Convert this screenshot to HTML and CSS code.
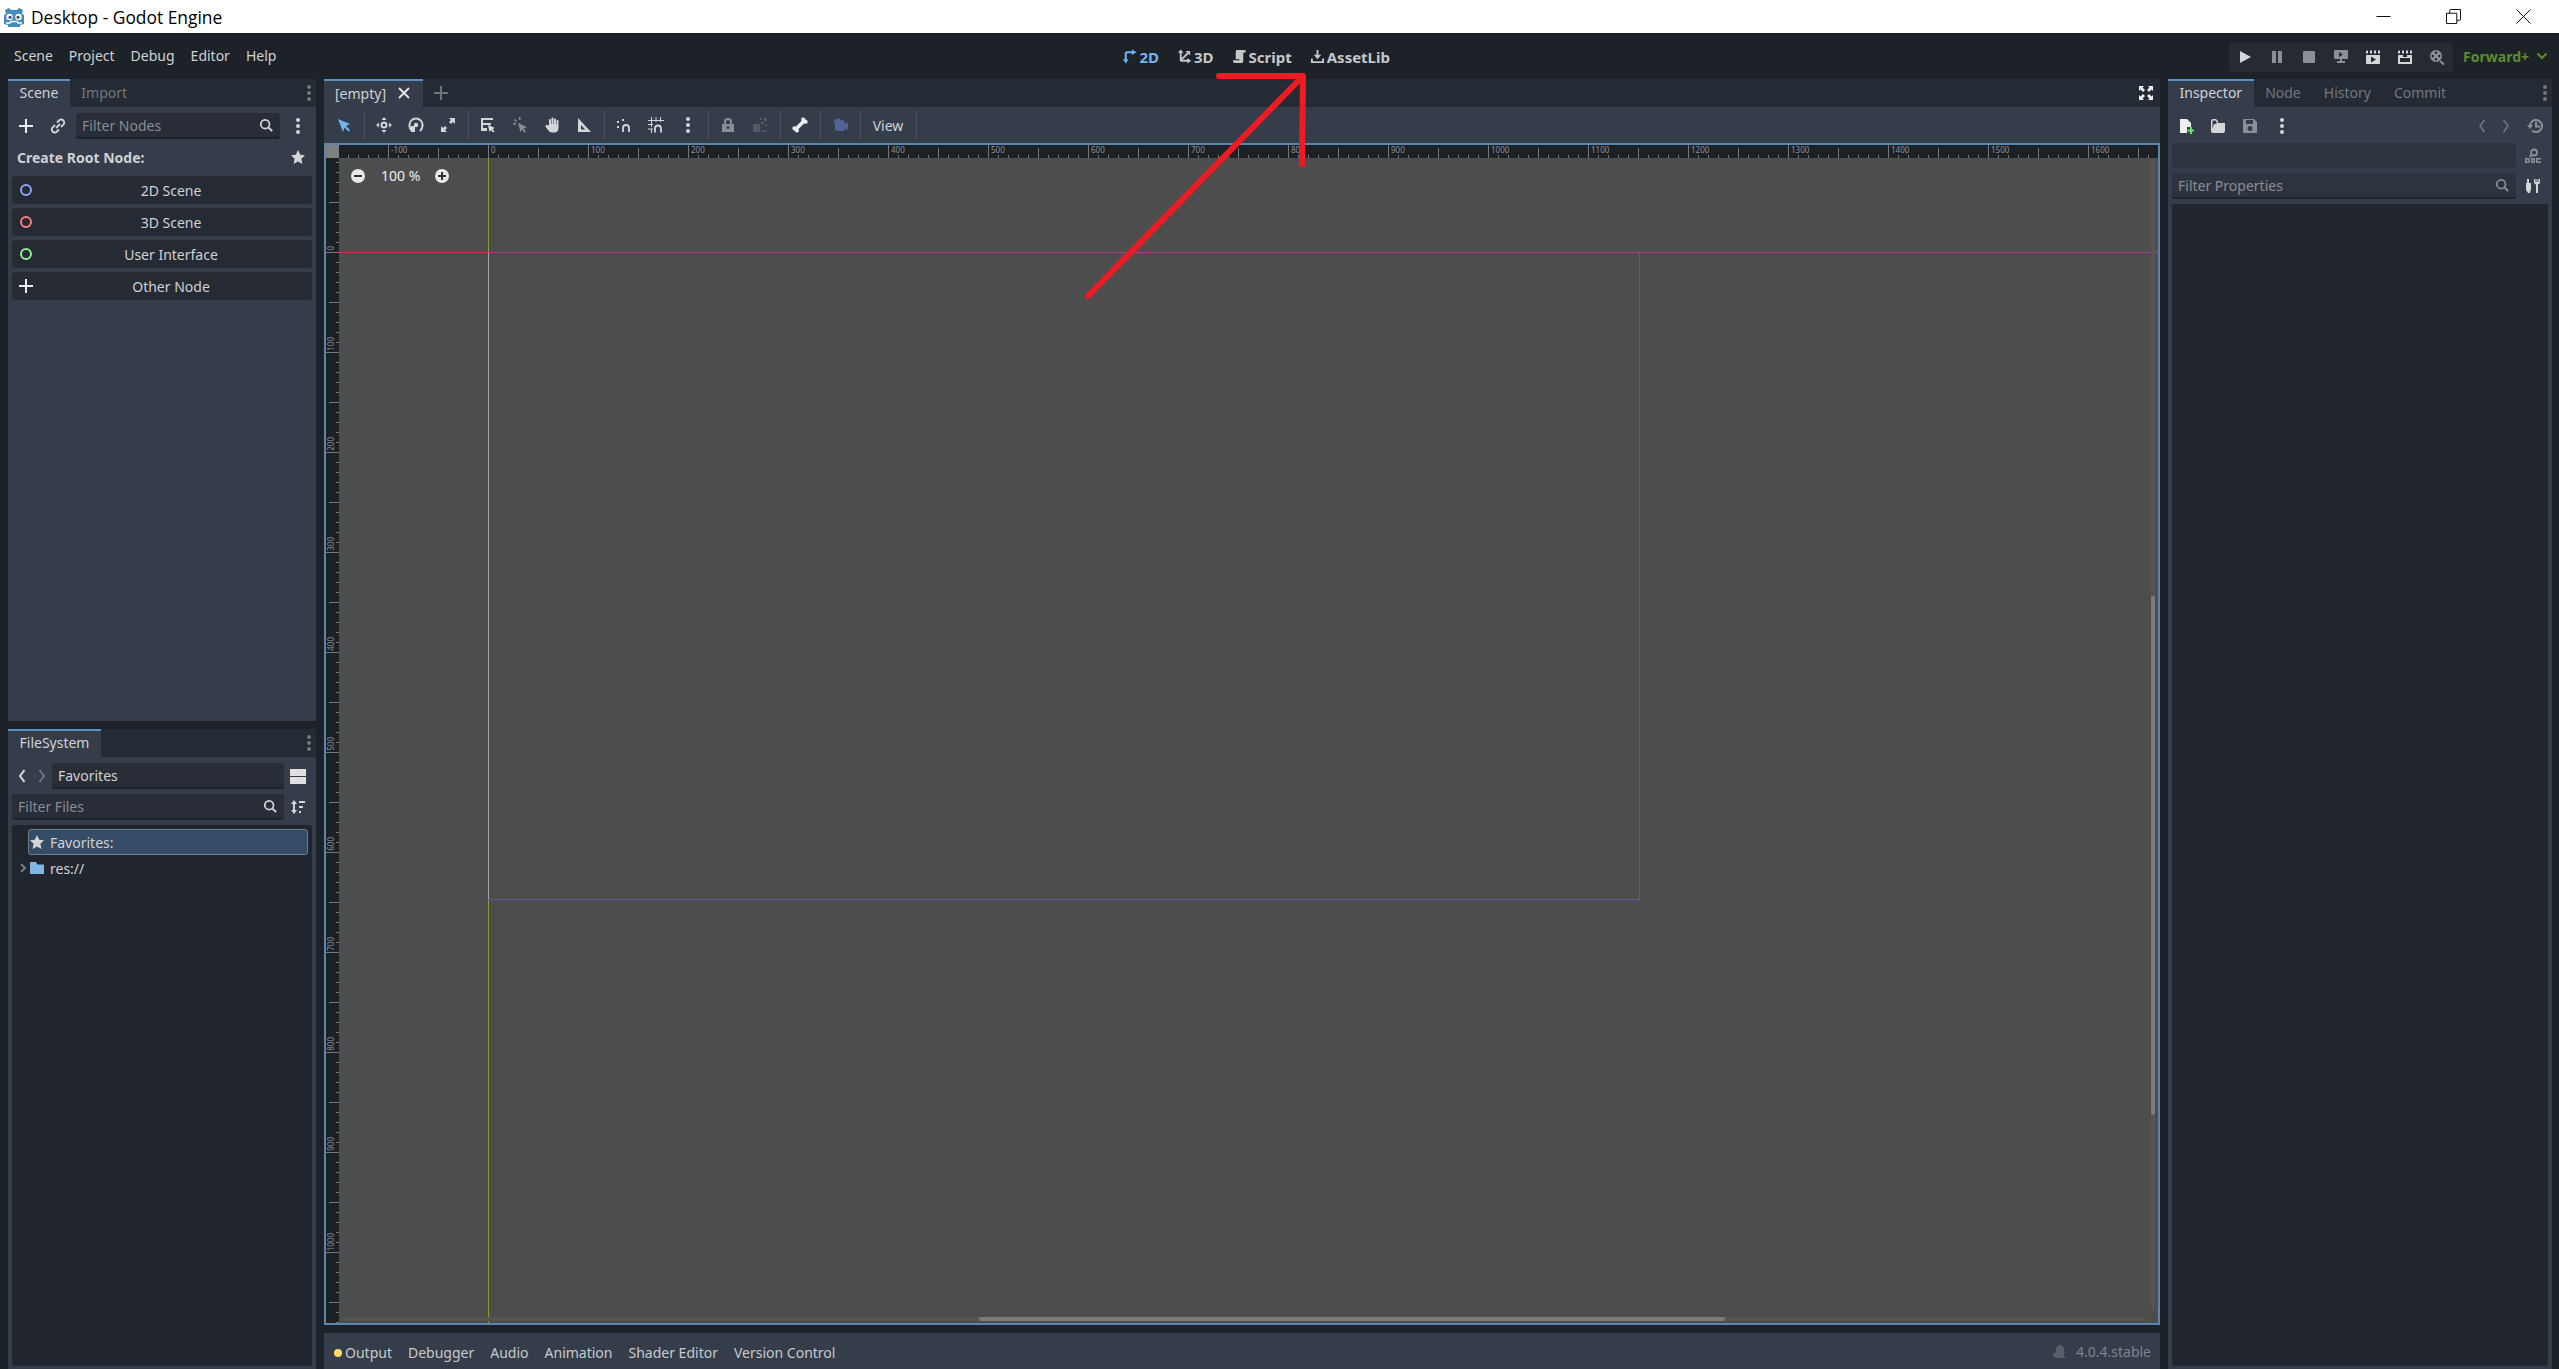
FILE: index.html
```html
<!DOCTYPE html>
<html lang="en">
<head>
    <meta charset="UTF-8">
    <meta name="viewport" content="width=device-width, initial-scale=1.0">
    <title>Desktop - Godot Engine</title>
    <link rel="stylesheet" href="styles.css">
</head>
<body>
    <!-- Window title bar -->
    <div class="titlebar">
        <svg class="app-logo" viewBox="0 0 24 24">
            <path fill="#478cbf" d="M2 10 L4 9 L3 5 L7 3 L9 5 L15 5 L17 3 L21 5 L20 9 L22 10 L22 19 L18 20 L18 22 L6 22 L6 20 L2 19 Z"/>
            <circle cx="7.5" cy="12" r="3.2" fill="#fff"/><circle cx="16.5" cy="12" r="3.2" fill="#fff"/>
            <circle cx="8" cy="12.2" r="1.5" fill="#414042"/><circle cx="16" cy="12.2" r="1.5" fill="#414042"/>
            <path d="M4 18 L8 18 L9 16.5 L15 16.5 L16 18 L20 18" fill="none" stroke="#fff" stroke-width="1.4"/>
        </svg>
        <span class="window-title">Desktop - Godot Engine</span>
        <div class="window-controls">
            <svg viewBox="0 0 16 16"><path d="M0.5 8 H15.5" stroke="#000" fill="none"/></svg>
            <svg viewBox="0 0 16 16"><path d="M0.5 4.5 H11.5 V15.5 H0.5 Z M4 4.5 V1.5 Q4 0.5 5 0.5 H15.5 V11 Q15.5 12 14.5 12 H11.5" stroke="#000" fill="none"/></svg>
            <svg viewBox="0 0 16 16"><path d="M0.5 0.5 L15.5 15.5 M15.5 0.5 L0.5 15.5" stroke="#000" fill="none"/></svg>
        </div>
    </div>

    <!-- Menu row -->
    <div class="menubar">
        <div class="menu">
            <span>Scene</span><span>Project</span><span>Debug</span><span>Editor</span><span>Help</span>
        </div>
        <div class="main-screens">
            <span class="screen screen-on">
                <svg class="ico" viewBox="0 0 16 16"><path d="M4 13 V5 Q4 3.5 5.5 3.5 H11" fill="none" stroke="currentColor" stroke-width="2.2"/><path d="M1 11 H7 L4 15.5 Z M10.5 0.5 L15.5 3.5 L10.5 6.5 Z"/></svg>
                2D
            </span>
            <span class="screen">
                <svg class="ico" viewBox="0 0 16 16"><path d="M4 13 V3 M4 12.5 H14 M5 11 L12 4" fill="none" stroke="currentColor" stroke-width="2"/><path d="M1 4 L4 0.5 L7 4 Z M11 9.5 L15 12.5 L11 15.5 Z M9 2 H14 V7 Z"/></svg>
                3D
            </span>
            <span class="screen">
                <svg class="ico" viewBox="0 0 16 16"><path d="M5 1 H13 Q15 1 15 3.5 L12 4 V13 Q12 15 10 15 H3 Q1 15 1 12 H8 V11 H4 V3 Q4 1 5 1 Z"/></svg>
                Script
            </span>
            <span class="screen">
                <svg class="ico" viewBox="0 0 16 16"><path d="M7 1 H9 V6 H12 L8 11 L4 6 H7 Z M1 10 H3 V13 H13 V10 H15 V15 H1 Z"/></svg>
                AssetLib
            </span>
        </div>
        <div class="run-area">
            <div class="run-bar">
                <svg class="ico" viewBox="0 0 16 16"><path d="M3 2 L14 8 L3 14 Z"/></svg>
                <svg class="ico ico-dim" viewBox="0 0 16 16"><path d="M3 2 H7 V14 H3 Z M9 2 H13 V14 H9 Z"/></svg>
                <svg class="ico ico-dim" viewBox="0 0 16 16"><path d="M3 2 H13 Q14 2 14 3 V13 Q14 14 13 14 H3 Q2 14 2 13 V3 Q2 2 3 2 Z"/></svg>
                <svg class="ico ico-dim" viewBox="0 0 16 16"><path fill-rule="evenodd" d="M2 1 H14 Q15 1 15 2 V9 Q15 10 14 10 H9 V12 H12 V14 H4 V12 H7 V10 H2 Q1 10 1 9 V2 Q1 1 2 1 Z M6 3 V8 L10 5.5 Z"/></svg>
                <svg class="ico" viewBox="0 0 16 16"><path fill-rule="evenodd" d="M1 6 H15 V14 Q15 15 14 15 H2 Q1 15 1 14 Z M6 7.5 V13.5 L11 10.5 Z M1 2 L3 1.5 V4.5 H1 Z M5 1.5 H7 V4.5 H5 Z M9 1.5 H11 V4.5 H9 Z M13 1.5 H15 V4.5 H13 Z"/></svg>
                <svg class="ico" viewBox="0 0 16 16"><path fill-rule="evenodd" d="M1 6 H6 V8 H10 V6 H15 V15 H1 Z M3 9 V13 H13 V9 Z M1 2 L3 1.5 V4.5 H1 Z M5 1.5 H7 V4.5 H5 Z M9 1.5 H11 V4.5 H9 Z M13 1.5 H15 V4.5 H13 Z"/></svg>
                <svg class="ico ico-dim" viewBox="0 0 16 16"><path fill-rule="evenodd" d="M7 1 A6 6 0 1 1 7 13 A6 6 0 1 1 7 1 Z M7 2.5 A1.3 1.3 0 1 0 7 5.1 A1.3 1.3 0 1 0 7 2.5 Z M3.8 5.8 A1.3 1.3 0 1 0 3.8 8.4 A1.3 1.3 0 1 0 3.8 5.8 Z M10.2 5.8 A1.3 1.3 0 1 0 10.2 8.4 A1.3 1.3 0 1 0 10.2 5.8 Z M7 9 A1.3 1.3 0 1 0 7 11.6 A1.3 1.3 0 1 0 7 9 Z"/><path d="M11 12 L15 15.5" stroke="currentColor" stroke-width="2"/></svg>
            </div>
            <span class="renderer">Forward+</span>
            <svg class="renderer-arrow" viewBox="0 0 12 8"><path d="M1.5 1.5 L6 6 L10.5 1.5" fill="none" stroke="currentColor" stroke-width="2"/></svg>
        </div>
    </div>

    <div class="workspace">
        <!-- Left docks -->
        <div class="left-col">
            <div class="dock scene-dock">
                <div class="tabs">
                    <span class="tab tab-on">Scene</span>
                    <span class="tab">Import</span>
                    <span class="tabs-menu"><i></i><i></i><i></i></span>
                </div>
                <div class="scene-tools">
                    <span class="tool-slot">
                        <svg class="ico ico-light" viewBox="0 0 16 16"><path d="M7 1 H9 V7 H15 V9 H9 V15 H7 V9 H1 V7 H7 Z"/></svg>
                    </span>
                    <span class="tool-slot">
                        <svg class="ico" viewBox="0 0 16 16"><path d="M6 10 L10 6 M7 4.5 L9.5 2 Q11.5 0.8 13.5 2.5 Q15 4.5 13.5 6.5 L11 9 M9 11.5 L6.5 14 Q4.5 15.2 2.5 13.5 Q1 11.5 2.5 9.5 L5 7" fill="none" stroke="currentColor" stroke-width="1.8"/></svg>
                    </span>
                    <div class="field scene-filter">
                        <span class="field-hint">Filter Nodes</span>
                        <svg class="ico" viewBox="0 0 16 16"><path d="M11 11 L15 15" stroke="currentColor" stroke-width="2.4"/><circle cx="7" cy="7" r="5" fill="none" stroke="currentColor" stroke-width="2"/></svg>
                    </div>
                    <span class="tool-slot tool-dots"><i></i><i></i><i></i></span>
                </div>
                <div class="root-head">
                    <strong>Create Root Node:</strong>
                    <svg class="ico" viewBox="0 0 16 16"><path d="M8 1 L10.2 5.8 L15 6.3 L11.4 9.7 L12.4 15 L8 12.4 L3.6 15 L4.6 9.7 L1 6.3 L5.8 5.8 Z"/></svg>
                </div>
                <div class="root-list">
                    <div class="root-btn"><span class="ring ring-blue"></span><span>2D Scene</span></div>
                    <div class="root-btn"><span class="ring ring-red"></span><span>3D Scene</span></div>
                    <div class="root-btn"><span class="ring ring-green"></span><span>User Interface</span></div>
                    <div class="root-btn">
                        <svg class="ico ico-light root-plus" viewBox="0 0 16 16"><path d="M7 1 H9 V7 H15 V9 H9 V15 H7 V9 H1 V7 H7 Z"/></svg>
                        <span>Other Node</span>
                    </div>
                </div>
            </div>

            <div class="dock files-dock">
                <div class="tabs">
                    <span class="tab tab-on">FileSystem</span>
                    <span class="tabs-menu"><i></i><i></i><i></i></span>
                </div>
                <div class="path-row">
                    <svg class="nav-arrow" viewBox="0 0 8 16"><path d="M6.5 2 L2 8 L6.5 14" fill="none" stroke="currentColor" stroke-width="2"/></svg>
                    <svg class="nav-arrow nav-off" viewBox="0 0 8 16"><path d="M1.5 2 L6 8 L1.5 14" fill="none" stroke="currentColor" stroke-width="2"/></svg>
                    <div class="field path-field">Favorites</div>
                    <span class="split-icon"><i></i><i></i></span>
                </div>
                <div class="filter-row">
                    <div class="field files-filter">
                        <span class="field-hint">Filter Files</span>
                        <svg class="ico" viewBox="0 0 16 16"><path d="M11 11 L15 15" stroke="currentColor" stroke-width="2.4"/><circle cx="7" cy="7" r="5" fill="none" stroke="currentColor" stroke-width="2"/></svg>
                    </div>
                    <svg class="ico sort-icon" viewBox="0 0 16 16"><path d="M4 3 V13" stroke="currentColor" stroke-width="2"/><path d="M1 5 L4 1 L7 5 Z M1 11 L4 15 L7 11 Z M9 2 H15 V4 H9 Z M9 7 H13 V9 H9 Z M9 12 H11 V14 H9 Z"/></svg>
                </div>
                <div class="file-tree">
                    <div class="tree-row tree-row-on">
                        <svg class="ico" viewBox="0 0 16 16"><path d="M8 1 L10.2 5.8 L15 6.3 L11.4 9.7 L12.4 15 L8 12.4 L3.6 15 L4.6 9.7 L1 6.3 L5.8 5.8 Z"/></svg>
                        <span>Favorites:</span>
                    </div>
                    <div class="tree-row">
                        <svg class="tree-arrow" viewBox="0 0 8 10"><path d="M2 1 L6 5 L2 9" fill="none" stroke="currentColor" stroke-width="1.8"/></svg>
                        <svg class="ico folder" viewBox="0 0 16 16"><path d="M1 2 H7 L8.5 4.5 H15 V14 H1 Z"/></svg>
                        <span>res://</span>
                    </div>
                </div>
            </div>
        </div>

        <!-- Centre: 2D editor -->
        <div class="center-col">
            <div class="scene-tabs">
                <div class="scene-tab">
                    <span>[empty]</span>
                    <svg class="close-x" viewBox="0 0 12 12"><path d="M1 1 L11 11 M11 1 L1 11" fill="none" stroke="currentColor" stroke-width="1.8"/></svg>
                </div>
                <svg class="tab-add" viewBox="0 0 16 16"><path d="M7 1 H9 V7 H15 V9 H9 V15 H7 V9 H1 V7 H7 Z"/></svg>
                <svg class="ico ico-light fullscreen" viewBox="0 0 16 16"><path d="M1 1 H6 L4.5 2.5 L7 5 L5 7 L2.5 4.5 L1 6 Z M15 1 V6 L13.5 4.5 L11 7 L9 5 L11.5 2.5 L10 1 Z M1 15 V10 L2.5 11.5 L5 9 L7 11 L4.5 13.5 L6 15 Z M15 15 H10 L11.5 13.5 L9 11 L11 9 L13.5 11.5 L15 10 Z"/></svg>
            </div>

            <div class="toolbar">
                <span class="tool"><svg class="ico ico-blue" viewBox="0 0 16 16"><path d="M2 2 L14 7 L10 9 L14 13 L12.5 14.5 L8.5 10.5 L7 15 Z"/></svg></span>
                <span class="sep"></span>
                <span class="tool"><svg class="ico" viewBox="0 0 16 16"><path fill-rule="evenodd" d="M8 0 L10.5 3 H5.5 Z M8 16 L5.5 13 H10.5 Z M0 8 L3 5.5 V10.5 Z M16 8 L13 10.5 V5.5 Z M8 4.5 A3.5 3.5 0 1 1 8 11.5 A3.5 3.5 0 1 1 8 4.5 Z M8 6.5 A1.5 1.5 0 1 0 8 9.5 A1.5 1.5 0 1 0 8 6.5 Z"/></svg></span>
                <span class="tool"><svg class="ico" viewBox="0 0 16 16"><path d="M4 14 Q1 11 1.5 8 A6.5 6.5 0 0 1 14.5 8 Q15 11 12 14" fill="none" stroke="currentColor" stroke-width="2"/><circle cx="8" cy="8" r="2.2"/><path d="M3 9 H7 V15 H3 Z"/></svg></span>
                <span class="tool"><svg class="ico" viewBox="0 0 16 16"><path d="M9 1 H15 V7 L13 5 L11 7 L9 5 L11 3 Z M7 15 H1 V9 L3 11 L5 9 L7 11 L5 13 Z"/></svg></span>
                <span class="sep"></span>
                <span class="tool"><svg class="ico" viewBox="0 0 16 16"><path fill-rule="evenodd" d="M1 1 H13 V3 H3 V6 H11 V8 H3 V11 H7 V14 H1 Z"/><path d="M8 8 L15 11 L12.5 12 L14.5 14.5 L13 15.5 L11 13 L9.5 15 Z" fill="#e0e0e0"/></svg></span>
                <span class="tool"><svg class="ico ico-dim" viewBox="0 0 16 16"><path d="M7 0 H8.5 V3 H7 Z M1 6 H4 V7.5 H1 Z M3 2 L5 4 L4 5 L2 3 Z M6 6 L15 10 L11.5 11.5 L14 14.5 L12.5 15.5 L10 12.5 L8.5 15 Z"/></svg></span>
                <span class="tool"><svg class="ico" viewBox="0 0 16 16"><path d="M5 8 V3 Q5 2 6 2 Q7 2 7 3 V7 H7.5 V1.5 Q7.5 0.5 8.5 0.5 Q9.5 0.5 9.5 1.5 V7 H10 V2.5 Q10 1.5 11 1.5 Q12 1.5 12 2.5 V7.5 H12.5 V4 Q12.5 3 13.5 3 Q14.5 3 14.5 4 V11 Q14.5 15.5 10 15.5 H8 Q5.5 15.5 4 13 L1.5 9.5 Q1 8.5 2 8 Q3 7.5 4 8.5 Z"/></svg></span>
                <span class="tool"><svg class="ico" viewBox="0 0 16 16"><path fill-rule="evenodd" d="M2 1 L15 15 H2 Z M5 8 V12.5 H9.2 Z"/></svg></span>
                <span class="sep"></span>
                <span class="tool"><svg class="ico" viewBox="0 0 16 16"><path d="M1 4 H3 V6 H1 Z M6 2 H8 V4 H6 Z M1 9 H3 V11 H1 Z"/><path d="M7 15 V11 A3 3 0 0 1 13 11 V15" fill="none" stroke="currentColor" stroke-width="1.8"/></svg></span>
                <span class="tool"><svg class="ico" viewBox="0 0 16 16"><path d="M3.5 0 V10 M8 0 V5 M12.5 0 V5 M0 3.5 H16 M0 7.5 H5 M3.5 12 V16 M0 12 H5" stroke="currentColor" fill="none" stroke-width="1"/><path d="M7 15.5 V11.5 A3 3 0 0 1 13 11.5 V15.5" fill="none" stroke="currentColor" stroke-width="1.8"/></svg></span>
                <span class="tool tool-dots"><i></i><i></i><i></i></span>
                <span class="sep"></span>
                <span class="tool"><svg class="ico ico-dim" viewBox="0 0 16 16"><path fill-rule="evenodd" d="M4 7 V5 A4 4 0 0 1 12 5 V7 H14 V15 H2 V7 Z M6 7 H10 V5 A2 2 0 0 0 6 5 Z M8 9 A1.5 1.5 0 1 0 8 12 A1.5 1.5 0 1 0 8 9 Z"/></svg></span>
                <span class="tool"><svg class="ico ico-dimmer" viewBox="0 0 16 16"><path d="M8 1 H10 V3 H8 Z M12 1 H15 V4 H12 Z M1 7 H8 V15 H1 Z M9 5 H12 V7 H9 Z M13 7 H15 V9 H13 Z M13 13 H15 V15 H13 Z M10 13 H12 V15 H10 Z"/></svg></span>
                <span class="sep"></span>
                <span class="tool"><svg class="ico ico-light" viewBox="0 0 16 16"><path d="M10.5 0.5 Q13 0 13.5 2.5 Q16 3 15.5 5.5 Q15 7.5 12 6.5 L6.5 12 Q7.5 15 5.5 15.5 Q3 16 2.5 13.5 Q0 13 0.5 10.5 Q1 8.5 4 9.5 L9.5 4 Q8.5 1 10.5 0.5 Z"/></svg></span>
                <span class="sep"></span>
                <span class="tool"><svg class="ico ico-camera" viewBox="0 0 16 16"><path d="M4.5 2 A3 3 0 0 1 9 3.5 A2.5 2.5 0 0 1 13 5 V7 L16 5.5 V13 L13 11.5 V13 Q13 14 12 14 H5 Q3 14 3 12 V7.5 A3 3 0 0 1 4.5 2 Z"/></svg></span>
                <span class="sep"></span>
                <span class="view-btn">View</span>
                <span class="sep"></span>
            </div>

            <div class="viewport">
                <span class="ruler-corner"></span>
                <div class="ruler-top">
                    <span class="ruler-start"></span>
                    <span>-100</span><span>0</span><span>100</span><span>200</span><span>300</span><span>400</span><span>500</span><span>600</span><span>700</span><span>800</span><span>900</span><span>1000</span><span>1100</span><span>1200</span><span>1300</span><span>1400</span><span>1500</span><span class="ruler-last">1600</span>
                </div>
                <div class="ruler-left">
                    <span class="ruler-zero"><b>0</b></span>
                    <span><b>100</b></span><span><b>200</b></span><span><b>300</b></span><span><b>400</b></span><span><b>500</b></span><span><b>600</b></span><span><b>700</b></span><span><b>800</b></span><span><b>900</b></span><span><b>1000</b></span>
                </div>
                <div class="canvas">
                    <span class="axis-y"></span>
                    <span class="axis-x-neg"></span>
                    <span class="axis-x-pos"></span>
                    <span class="screen-rect"></span>
                    <div class="zoom-widget">
                        <span class="zoom-btn"><i class="bar"></i></span>
                        <span class="zoom-value">100 %</span>
                        <span class="zoom-btn"><i class="bar"></i><i class="bar bar-v"></i></span>
                    </div>
                    <div class="scroll-h"><span></span></div>
                    <div class="scroll-v"><span></span></div>
                </div>
            </div>

            <div class="bottom-panel">
                <span class="output-dot"></span>
                <span class="bottom-tab tab-output">Output</span>
                <span class="bottom-tab">Debugger</span>
                <span class="bottom-tab">Audio</span>
                <span class="bottom-tab">Animation</span>
                <span class="bottom-tab">Shader Editor</span>
                <span class="bottom-tab">Version Control</span>
                <div class="status">
                    <svg class="ico bell" viewBox="0 0 16 16"><path d="M9 1 Q13 1 13 6 V12 L15 14 H5 L1 10 L4 9 L5 5 Q6 1 9 1 Z"/></svg>
                    <span>4.0.4.stable</span>
                </div>
            </div>
        </div>

        <!-- Right dock -->
        <div class="dock right-dock">
            <div class="tabs">
                <span class="tab tab-on">Inspector</span>
                <span class="tab">Node</span>
                <span class="tab">History</span>
                <span class="tab">Commit</span>
                <span class="tabs-menu"><i></i><i></i><i></i></span>
            </div>
            <div class="insp-tools">
                <span class="tool-slot"><svg class="ico ico-light" viewBox="0 0 16 16"><path d="M2 1 H9 L13 5 V9 H9 V15 H2 Z"/><path d="M12 9 H14 V11.5 H16 V13.5 H14 V16 H12 V13.5 H9.5 V11.5 H12 Z" fill="#5fe36c"/></svg></span>
                <span class="tool-slot"><svg class="ico" viewBox="0 0 16 16"><path fill-rule="evenodd" d="M1 3 Q1 1 3 1 H6 L8 3 V5 H15 V13 Q15 15 13 15 H3 Q1 15 1 13 Z M2.5 3 V11 L4 6 H6.5 V3.5 L5.5 2.5 H3 Z"/></svg></span>
                <span class="tool-slot"><svg class="ico ico-dim" viewBox="0 0 16 16"><path fill-rule="evenodd" d="M2 1 H12 L15 4 V14 Q15 15 14 15 H2 Q1 15 1 14 V2 Q1 1 2 1 Z M4 2 V6 H11 V2 Z M8 8 A2.5 2.5 0 1 0 8 13 A2.5 2.5 0 1 0 8 8 Z"/></svg></span>
                <span class="tool-slot tool-dots"><i></i><i></i><i></i></span>
                <span class="insp-nav">
                    <svg class="nav-arrow nav-off" viewBox="0 0 8 16"><path d="M6.5 2 L2 8 L6.5 14" fill="none" stroke="currentColor" stroke-width="1.6"/></svg>
                    <svg class="nav-arrow nav-off" viewBox="0 0 8 16"><path d="M1.5 2 L6 8 L1.5 14" fill="none" stroke="currentColor" stroke-width="1.6"/></svg>
                    <svg class="ico ico-dim" viewBox="0 0 16 16"><path d="M3 8 A6 6 0 1 1 5 12.5" fill="none" stroke="currentColor" stroke-width="2"/><path d="M0 7 H6 L3 11 Z M8 4 H10 V7.5 H13 V9.5 H8 Z"/></svg>
                </span>
            </div>
            <div class="insp-row">
                <div class="insp-field"></div>
                <svg class="ico ico-dim doc-icon" viewBox="0 0 16 16"><circle cx="9" cy="4.5" r="3" fill="none" stroke="currentColor" stroke-width="1.8"/><path d="M7 7 L4.5 9" stroke="currentColor" stroke-width="1.8"/><path fill-rule="evenodd" d="M0 10 H3.5 Q5 10 5 12 V13 Q5 15 3.5 15 H0 Z M1.5 11.5 V13.5 H3.3 V11.5 Z M6 10 H10 V15 H6 Z M7.5 11.5 V13.5 H8.5 V11.5 Z M11 10 H16 V11.5 H12.5 V13.5 H16 V15 H11 Z"/></svg>
            </div>
            <div class="insp-row">
                <div class="insp-field insp-filter">
                    <span class="field-hint">Filter Properties</span>
                    <svg class="ico ico-dim" viewBox="0 0 16 16"><path d="M11 11 L15 15" stroke="currentColor" stroke-width="2.4"/><circle cx="7" cy="7" r="5" fill="none" stroke="currentColor" stroke-width="2"/></svg>
                </div>
                <svg class="ico doc-icon" viewBox="0 0 16 16"><path d="M2 1 H4 V5 H6 V11 L5 15 H3 L1 12 V5 H2 Z"/><path d="M9 1 V4 Q9 6 11 6.5 V15 H13 V6.5 Q15 6 15 4 V1 H13.5 V4 H12.5 V1 H11.5 V4 H10.5 V1 Z"/></svg>
            </div>
            <div class="insp-tree"></div>
        </div>
    </div>

    <!-- Red arrow drawn over the screenshot -->
    <svg class="annotation" viewBox="0 0 2559 1369">
        <path d="M1219 76 H1303 L1088 296 M1303 76 L1302 164" fill="none" stroke="#ed1c24" stroke-width="6" stroke-linecap="round" stroke-linejoin="round"/>
    </svg>
</body>
</html>
```

FILE: styles.css
```css
body, html {
    height: 100%;
    margin: 0;
    overflow: hidden;
    font-family: "Noto Sans", sans-serif;
    font-size: 14px;
    color: #d0d2d5;
}

body {
    display: flex;
    flex-direction: column;
    background-color: #1d2229;
    position: relative;
}

i {
    display: block;
}

/* Title bar */
.titlebar {
    height: 33px;
    flex: none;
    display: flex;
    align-items: center;
    background-color: #fff;
    color: #000;
}

.app-logo {
    width: 24px;
    height: 24px;
    margin-left: 2px;
    margin-right: 5px;
}

.window-title {
    font-family: "Open Sans", sans-serif;
    font-size: 17.4px;
}

.window-controls {
    margin-left: auto;
    margin-right: 28px;
    display: flex;
    gap: 55px;
}

.window-controls svg {
    width: 15px;
    height: 15px;
}

/* Menu row */
.menubar {
    height: 46px;
    flex: none;
    display: flex;
    align-items: center;
    position: relative;
}

.menu {
    display: flex;
    gap: 16px;
    margin-left: 14px;
    margin-top: -2px;
}

.main-screens {
    display: flex;
    gap: 18px;
    margin-left: 846px;
    font-size: 15px;
    font-weight: 700;
    color: #c5c7ca;
    margin-top: 1px;
}

.screen {
    display: flex;
    align-items: center;
    gap: 2px;
}

.screen-on {
    color: #70b4f0;
}

.run-area {
    margin-left: auto;
    display: flex;
    align-items: center;
    margin-right: 11px;
}

.run-bar {
    width: 224px;
    height: 30px;
    box-sizing: border-box;
    padding: 0 8px;
    display: flex;
    align-items: center;
    justify-content: space-between;
    background-color: #252a33;
    border-radius: 3px;
    margin-top: 2px;
}

.renderer {
    margin-left: 10px;
    font-weight: 700;
    color: #5d8c30;
}

.renderer-arrow {
    width: 12px;
    height: 8px;
    margin-left: 7px;
    color: #5d8c30;
}

/* Icons */
.ico {
    width: 16px;
    height: 16px;
    flex: none;
    fill: currentColor;
    color: #d4d5d7;
}

.screen .ico {
    color: inherit;
    width: 15px;
    height: 15px;
}

.field .ico,
.insp-filter .ico {
    width: 14px;
    height: 14px;
}

.ico-light {
    color: #eeeeee;
}

.ico-dim,
.insp-filter .ico-dim {
    color: #8c9096;
}

.ico-dimmer {
    color: #555b64;
}

.ico-blue {
    color: #70b4f0;
}

.ico-camera {
    color: #4f6394;
}

/* Workspace */
.workspace {
    flex: 1;
    min-height: 0;
    display: flex;
    gap: 8px;
    padding: 0 7px 0 8px;
}

.left-col {
    width: 308px;
    flex: none;
    display: flex;
    flex-direction: column;
    gap: 8px;
}

.dock {
    background-color: #363d4a;
    display: flex;
    flex-direction: column;
    border-radius: 3px 3px 0 0;
}

.scene-dock {
    height: 642px;
    flex: none;
}

.files-dock {
    flex: 1;
    min-height: 0;
}

.right-dock {
    width: 384px;
    flex: none;
}

.center-col {
    flex: 1;
    min-width: 0;
    display: flex;
    flex-direction: column;
}

/* Dock tabs */
.tabs {
    height: 28px;
    flex: none;
    display: flex;
    background-color: #252b34;
}

.tab {
    padding: 0 11.5px;
    line-height: 24px;
    border-top: 2px solid transparent;
    color: #73777e;
}

.tab-on {
    background-color: #363d4a;
    border-top-color: #5c8fc2;
    color: #d0d2d5;
}

.tabs-menu {
    margin-left: auto;
    margin-right: 5px;
    display: flex;
    flex-direction: column;
    justify-content: center;
    gap: 2px;
}

.tabs-menu i {
    width: 4px;
    height: 4px;
    border-radius: 50%;
    background-color: #72767d;
}

.tool-dots {
    display: flex;
    flex-direction: column;
    align-items: center;
    justify-content: center;
    gap: 1.5px;
}

.tool-dots i {
    width: 4.5px;
    height: 4.5px;
    border-radius: 50%;
    background-color: #d4d5d7;
}

/* Inputs */
.field {
    height: 26px;
    box-sizing: border-box;
    display: flex;
    align-items: center;
    justify-content: space-between;
    background-color: #282d37;
    border-bottom: 2px solid #1e2229;
    border-radius: 3px;
    padding: 0 7px 0 6px;
}

.field-hint {
    color: #898c92;
}

/* Scene dock */
.scene-tools {
    height: 36px;
    box-sizing: border-box;
    flex: none;
    display: flex;
    align-items: center;
    padding: 2px 2px 0 2px;
}

.tool-slot {
    width: 32px;
    height: 26px;
    flex: none;
    display: flex;
    align-items: center;
    justify-content: center;
}

.scene-filter {
    width: 204px;
    margin: 0 2px 0 2px;
}

.root-head {
    height: 28px;
    flex: none;
    display: flex;
    align-items: center;
    justify-content: space-between;
    padding: 0 10px 0 9px;
}

.root-list {
    display: flex;
    flex-direction: column;
    gap: 4px;
    padding: 5px 4px 0;
}

.root-btn {
    height: 28px;
    display: flex;
    align-items: center;
    justify-content: center;
    background-color: #252a33;
    border-radius: 3px;
    position: relative;
    padding-left: 18px;
}

.ring {
    position: absolute;
    left: 8px;
    top: 8px;
    width: 12px;
    height: 12px;
    box-sizing: border-box;
    border: 2px solid;
    border-radius: 50%;
}

.ring-blue {
    border-color: #8da5f3;
}

.ring-red {
    border-color: #fc7f7f;
}

.ring-green {
    border-color: #8eef97;
}

.root-plus {
    position: absolute;
    left: 6px;
    top: 6px;
}

/* FileSystem dock */
.path-row {
    height: 26px;
    margin-top: 6px;
    flex: none;
    display: flex;
    align-items: center;
}

.nav-arrow {
    width: 8px;
    height: 16px;
    flex: none;
    color: #dcdddf;
}

.nav-off {
    color: #70747b;
}

.path-row .nav-arrow:first-child {
    margin-left: 10px;
}

.path-row .nav-arrow + .nav-arrow {
    margin-left: 12px;
}

.path-field {
    width: 232px;
    margin-left: 6px;
}

.split-icon {
    margin-left: 6px;
    display: flex;
    flex-direction: column;
    gap: 1px;
}

.split-icon i {
    width: 16px;
    height: 7px;
    background-color: #e0e0e0;
}

.filter-row {
    margin-top: 5px;
    flex: none;
    display: flex;
    align-items: center;
    padding-left: 4px;
}

.files-filter {
    width: 272px;
}

.sort-icon {
    margin-left: 6px;
}

.file-tree {
    flex: 1;
    margin: 5px 4px 3px;
    padding: 4px 4px 0 16px;
    background-color: #21262e;
    border-radius: 3px;
}

.tree-row {
    height: 26px;
    display: flex;
    align-items: center;
    gap: 5px;
    position: relative;
    padding-left: 1px;
}

.tree-row-on {
    box-sizing: border-box;
    background-color: #354c66;
    border: 1px solid #6f7b89;
    border-radius: 3px;
    padding-left: 0;
}

.tree-arrow {
    position: absolute;
    left: -9px;
    top: 8px;
    width: 8px;
    height: 10px;
    color: #7d8187;
}

.folder {
    color: #80b6e3;
}

/* Scene tabs */
.scene-tabs {
    height: 28px;
    flex: none;
    display: flex;
    align-items: center;
    background-color: #252b34;
}

.scene-tab {
    width: 99px;
    height: 100%;
    box-sizing: border-box;
    display: flex;
    align-items: center;
    padding: 0 0 2px 11px;
    background-color: #363d4a;
    border-top: 2px solid #5c8fc2;
}

.close-x {
    width: 12px;
    height: 12px;
    margin-left: 12px;
    color: #e6e6e6;
}

.tab-add {
    width: 16px;
    height: 16px;
    margin-left: 10px;
    fill: #6f747b;
}

.fullscreen {
    margin-left: auto;
    margin-right: 6px;
}

/* Canvas toolbar */
.toolbar {
    height: 36px;
    flex: none;
    display: flex;
    align-items: center;
    padding-left: 4px;
    background-color: #363d4a;
}

.tool {
    width: 32px;
    height: 30px;
    flex: none;
    display: flex;
    align-items: center;
    justify-content: center;
}

.tool.tool-dots {
    display: flex;
}

.sep {
    width: 8px;
    height: 28px;
    flex: none;
    background: linear-gradient(#4c535f, #4c535f) center / 1px 100% no-repeat;
}

.view-btn {
    width: 48px;
    text-align: center;
    flex: none;
}

/* Viewport */
.viewport {
    flex: 1;
    min-height: 0;
    display: grid;
    grid-template-columns: 13px 1fr;
    grid-template-rows: 13px 1fr;
    border: 2px solid #5a85ad;
    background-color: #4d4d4d;
}

.ruler-corner {
    background-color: #808080;
}

.ruler-top {
    display: flex;
    overflow: hidden;
    background-color: #1c2128;
    background-image:
        linear-gradient(90deg, #74787d 1px, transparent 1px),
        linear-gradient(90deg, #74787d 1px, transparent 1px);
    background-size: 10px 3px, 50px 10px;
    background-position: 9px bottom, 49px bottom;
    background-repeat: repeat-x;
}

.ruler-top span {
    width: 100px;
    flex: none;
    box-sizing: border-box;
    border-left: 1px solid #74787d;
    padding-left: 2px;
    font-size: 8px;
    line-height: 9px;
    color: #8e9196;
}

.ruler-top .ruler-start {
    width: 49px;
    border-left: 0;
}

.ruler-top .ruler-last {
    width: 70px;
}

.ruler-left {
    display: flex;
    flex-direction: column;
    overflow: hidden;
    background-color: #1c2128;
    background-image:
        linear-gradient(#74787d 1px, transparent 1px),
        linear-gradient(#74787d 1px, transparent 1px);
    background-size: 3px 10px, 10px 50px;
    background-position: right 4px, right 44px;
    background-repeat: repeat-y;
}

.ruler-left span {
    height: 100px;
    flex: none;
    box-sizing: border-box;
    border-bottom: 1px solid #74787d;
    display: flex;
    align-items: flex-end;
}

.ruler-left .ruler-zero {
    height: 95px;
}

.ruler-left b {
    writing-mode: vertical-rl;
    transform: rotate(180deg);
    font-weight: 400;
    font-size: 8px;
    line-height: 9px;
    color: #8e9196;
    padding-top: 1px;
}

.canvas {
    position: relative;
    overflow: hidden;
}

.axis-y {
    position: absolute;
    left: 149px;
    top: 0;
    bottom: 0;
    width: 1px;
    background: linear-gradient(#7ea32a 94px, #a0a89c 94px, #a0a89c 742px, #7ea32a 742px);
}

.axis-x-neg {
    position: absolute;
    left: 0;
    top: 94px;
    width: 149px;
    height: 1px;
    background-color: #d8303f;
}

.axis-x-pos {
    position: absolute;
    left: 149px;
    right: 0;
    top: 94px;
    height: 1px;
    background-color: #a83c92;
}

.screen-rect {
    position: absolute;
    left: 149px;
    top: 94px;
    width: 1152px;
    height: 648px;
    box-sizing: border-box;
    border-right: 1px solid #5858a8;
    border-bottom: 1px solid #5858a8;
}

.zoom-widget {
    position: absolute;
    left: 12px;
    top: 11px;
    display: flex;
    align-items: center;
    gap: 16px;
    color: #eeeeee;
}

.zoom-btn {
    width: 14px;
    height: 14px;
    border-radius: 50%;
    background-color: #e8e8e8;
    position: relative;
}

.bar {
    position: absolute;
    left: 3px;
    top: 6px;
    width: 8px;
    height: 2px;
    background-color: #333;
}

.bar-v {
    left: 6px;
    top: 3px;
    width: 2px;
    height: 8px;
}

.zoom-value {
    width: 38px;
    line-height: 14px;
    white-space: nowrap;
    text-align: center;
}

.scroll-h {
    position: absolute;
    left: 4px;
    right: 14px;
    bottom: 2px;
    height: 4px;
    background-color: #555555;
    border-radius: 2px;
}

.scroll-h span {
    display: block;
    margin-left: 636px;
    width: 746px;
    height: 100%;
    background-color: #7c7c7c;
    border-radius: 2px;
}

.scroll-v {
    position: absolute;
    top: 0;
    right: 3px;
    bottom: 13px;
    width: 4px;
    background-color: #555555;
    border-radius: 2px;
}

.scroll-v span {
    display: block;
    margin-top: 438px;
    height: 519px;
    background-color: #7c7c7c;
    border-radius: 2px;
}

/* Bottom panel */
.bottom-panel {
    height: 36px;
    box-sizing: border-box;
    flex: none;
    margin-top: 8px;
    display: flex;
    align-items: center;
    gap: 16px;
    padding: 3px 9px 0 10px;
    background-color: #363d4a;
}

.output-dot {
    width: 8px;
    height: 8px;
    border-radius: 50%;
    background-color: #ffdd65;
    margin-right: -13px;
}

.bottom-tab {
    color: #c8cacd;
}

.status {
    margin-left: auto;
    display: flex;
    align-items: center;
    gap: 9px;
    color: #7f8389;
    margin-top: -2px;
}

.bell {
    color: #5a6069;
}

/* Inspector */
.insp-tools {
    height: 36px;
    box-sizing: border-box;
    flex: none;
    display: flex;
    align-items: center;
    padding: 2px 9px 0 2px;
}

.insp-nav {
    margin-left: auto;
    display: flex;
    align-items: center;
}

.insp-nav .nav-arrow + .nav-arrow {
    margin-left: 16px;
}

.insp-nav .ico {
    margin-left: 17px;
}

.insp-row {
    display: flex;
    align-items: center;
    flex: none;
    padding-left: 4px;
    margin-bottom: 5px;
}

.insp-field {
    width: 344px;
    height: 25px;
    box-sizing: border-box;
    background-color: #2e343f;
    border-radius: 3px;
    display: flex;
    align-items: center;
    justify-content: space-between;
    padding: 0 7px 0 6px;
}

.insp-filter {
    height: 26px;
    border-bottom: 2px solid #1e2229;
}

.doc-icon {
    margin-left: 9px;
}

.insp-tree {
    flex: 1;
    margin: 0 4px 3px;
    background-color: #21262e;
    border-radius: 3px;
}

/* Annotation */
.annotation {
    position: absolute;
    left: 0;
    top: 0;
    width: 2559px;
    height: 1369px;
    pointer-events: none;
}
```
